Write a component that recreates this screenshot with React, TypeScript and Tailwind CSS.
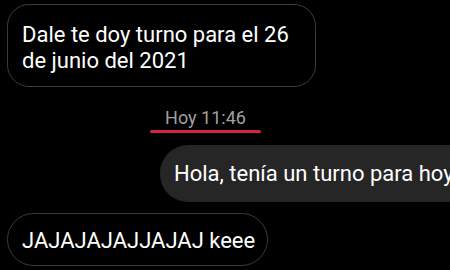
import React from 'react';

const font = { fontFamily: 'Roboto, "Noto Sans", sans-serif' };

export default function App() {
  return (
    <div className="w-[450px] h-[270px] bg-black overflow-hidden text-white" style={font}>
      <div className="flex flex-col pt-[4px] pl-[7px]">
        <div className="w-[309px] h-[83px] rounded-[22px] border border-[#3c3c3c] pl-[14px] pt-[17px] text-[22px] leading-[26px]">
          Dale te doy turno para el 26
          <br />
          de junio del 2021
        </div>

        <div className="flex flex-col items-center w-[397px] mt-[20px]">
          <span className="text-[18px] leading-[21px] text-[#a0a0a0]">Hoy 11:46</span>
          <div className="w-[111px] h-[3px] mt-[2px] rounded-full bg-[#d3253a]" />
        </div>

        <div className="ml-[153px] mt-[12px] h-[57px] w-[320px] rounded-l-[28px] bg-[#262626] flex items-center pl-[14px] text-[22px] whitespace-nowrap">
          Hola, tenía un turno para hoy
        </div>

        <div className="mt-[11px] h-[53px] w-[261px] rounded-full border border-[#3c3c3c] flex items-center pl-[14px] pt-[2px] text-[22px] whitespace-nowrap">
          JAJAJAJAJJAJAJ keee
        </div>
      </div>
    </div>
  );
}
